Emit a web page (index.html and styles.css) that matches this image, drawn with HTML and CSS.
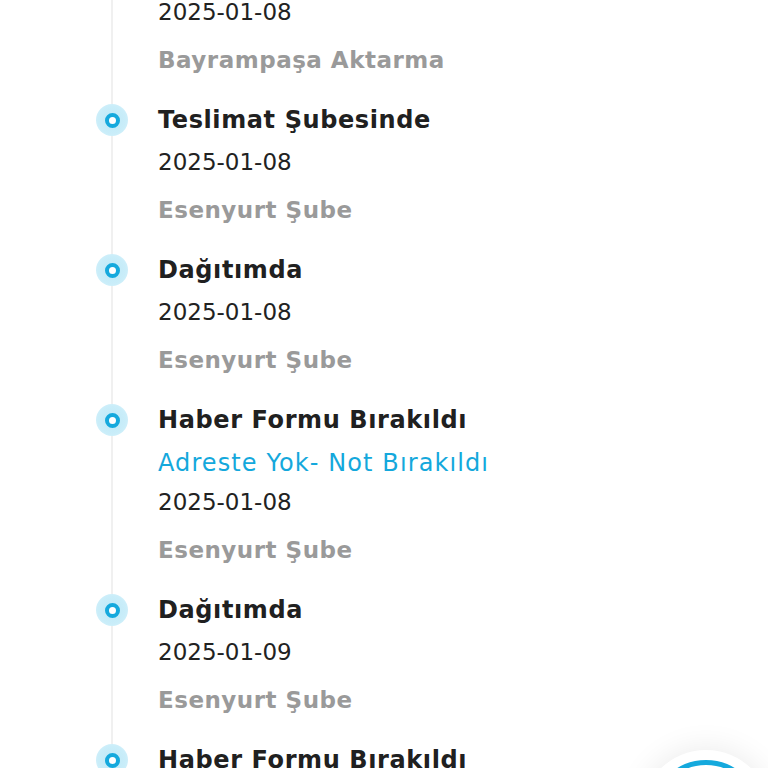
FILE: index.html
```html
<!DOCTYPE html>
<html lang="tr">
<head>
<meta charset="utf-8">
<title>Gönderi Takibi</title>
<link rel="stylesheet" href="styles.css">
</head>
<body>
<ol class="timeline">
  <li class="step step-partial">
    <div class="step-body">
      <div class="step-date">2025-01-08</div>
      <div class="step-place">Bayrampaşa Aktarma</div>
    </div>
  </li>
  <li class="step">
    <span class="step-dot"></span>
    <div class="step-body">
      <div class="step-title">Teslimat Şubesinde</div>
      <div class="step-date">2025-01-08</div>
      <div class="step-place">Esenyurt Şube</div>
    </div>
  </li>
  <li class="step">
    <span class="step-dot"></span>
    <div class="step-body">
      <div class="step-title">Dağıtımda</div>
      <div class="step-date">2025-01-08</div>
      <div class="step-place">Esenyurt Şube</div>
    </div>
  </li>
  <li class="step">
    <span class="step-dot"></span>
    <div class="step-body">
      <div class="step-title">Haber Formu Bırakıldı</div>
      <div class="step-note">Adreste Yok- Not Bırakıldı</div>
      <div class="step-date step-date-tight">2025-01-08</div>
      <div class="step-place">Esenyurt Şube</div>
    </div>
  </li>
  <li class="step">
    <span class="step-dot"></span>
    <div class="step-body">
      <div class="step-title">Dağıtımda</div>
      <div class="step-date">2025-01-09</div>
      <div class="step-place">Esenyurt Şube</div>
    </div>
  </li>
  <li class="step">
    <span class="step-dot"></span>
    <div class="step-body">
      <div class="step-title">Haber Formu Bırakıldı</div>
      <div class="step-note">Adreste Yok- Not Bırakıldı</div>
      <div class="step-date step-date-tight">2025-01-09</div>
      <div class="step-place">Esenyurt Şube</div>
    </div>
  </li>
</ol>
<button class="fab" aria-label="Yardım"><span class="fab-ring"></span></button>
</body>
</html>
```
FILE: styles.css
```css
html, body {
  margin: 0;
  padding: 0;
  background: #ffffff;
  height: 100%;
  overflow: hidden;
}

body {
  font-family: "DejaVu Sans", "Noto Sans", sans-serif;
  color: #1e1e1e;
}

.timeline {
  list-style: none;
  margin: -6px 0 0 0;
  padding: 0 0 0 96px;
  position: relative;
}

.timeline::before {
  content: "";
  position: absolute;
  left: 111px;
  top: 0;
  bottom: 0;
  width: 2px;
  background: #f0f0f0;
}

.step {
  display: grid;
  grid-template-columns: 32px 1fr;
  column-gap: 30px;
  padding-bottom: 24px;
  position: relative;
}

.step-dot {
  grid-column: 1;
  align-self: start;
  margin-top: 2px;
  width: 32px;
  height: 32px;
  border-radius: 50%;
  background: radial-gradient(circle, #bfe9f7 0%, #c9edf9 60%, #dcf4fc 100%);
  display: flex;
  align-items: center;
  justify-content: center;
  position: relative;
  z-index: 1;
}

.step-dot::after {
  content: "";
  width: 7px;
  height: 7px;
  border: 4px solid #15a9dd;
  border-radius: 50%;
  background: #ffffff;
}

.step-body {
  grid-column: 2;
  display: flex;
  flex-direction: column;
  white-space: nowrap;
}

.step-title {
  font-size: 24px;
  line-height: 36px;
  font-weight: 700;
  color: #202020;
  letter-spacing: 0.6px;
}

.step-note {
  margin-top: 7px;
  font-size: 24px;
  line-height: 36px;
  font-weight: 400;
  color: #14a8dc;
  letter-spacing: 1.1px;
}

.step-date {
  margin-top: 6px;
  font-size: 23px;
  line-height: 36px;
  font-weight: 400;
  color: #222222;
  letter-spacing: 0;
}

.step-date-tight {
  margin-top: 3px;
}

.step-partial .step-date {
  margin-top: 0;
}

.step-place {
  margin-top: 12px;
  font-size: 23px;
  line-height: 36px;
  font-weight: 700;
  color: #9a9a9a;
  letter-spacing: 0.5px;
}

.fab {
  position: fixed;
  right: -3px;
  bottom: -112px;
  width: 130px;
  height: 130px;
  border: none;
  border-radius: 50%;
  background: #ffffff;
  box-shadow: 0 0 32px rgba(0, 0, 0, 0.09);
  display: flex;
  align-items: center;
  justify-content: center;
  padding: 0;
}

.fab-ring {
  width: 110px;
  height: 110px;
  border: 5px solid #15a9dd;
  border-radius: 50%;
  box-sizing: border-box;
}
```
